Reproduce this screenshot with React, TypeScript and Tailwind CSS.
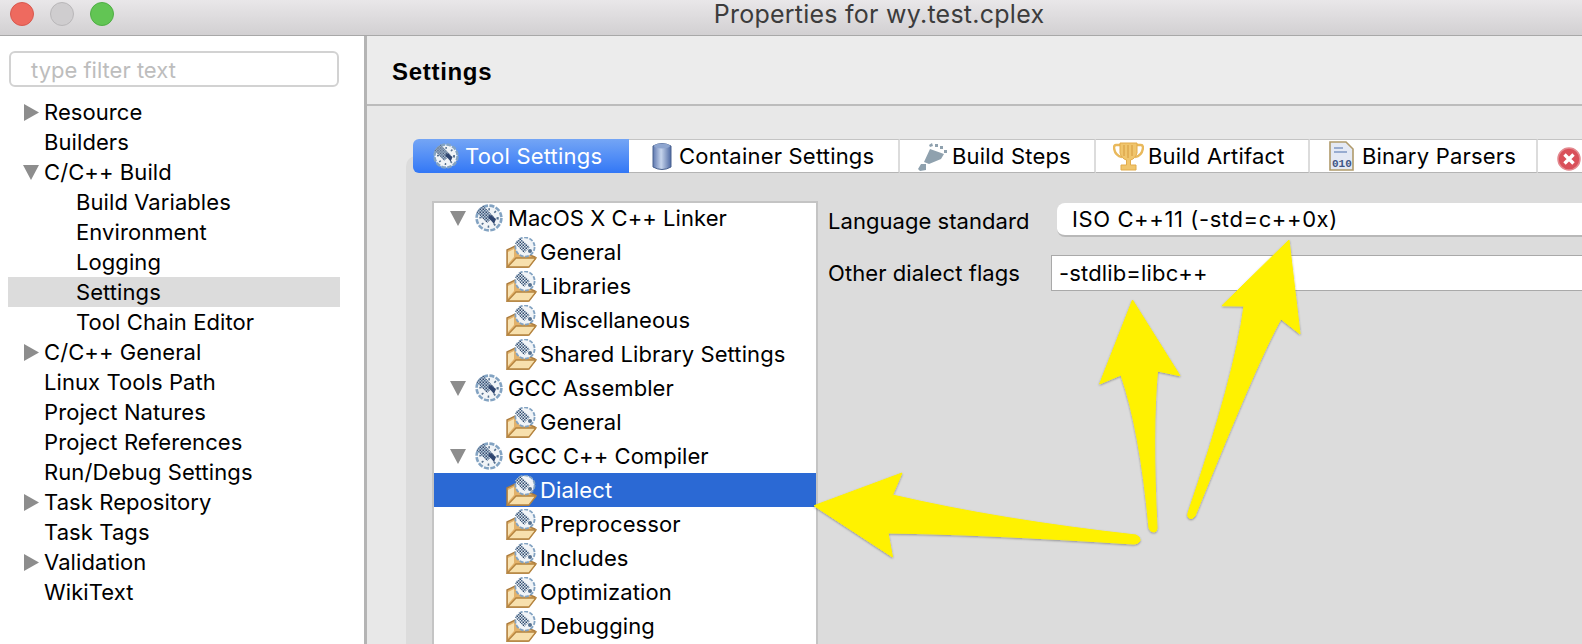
import React from "react";

const font = "font-['Inter','Liberation_Sans',sans-serif]";

function Gear({ size = 28 }: { size?: number }) {
  return (
    <svg width={size} height={size} viewBox="0 0 28 28" className="shrink-0">
      <defs>
        <pattern id="dith" width="3" height="3" patternUnits="userSpaceOnUse">
          <rect width="3" height="3" fill="#b9c8d8" />
          <rect width="1.5" height="1.5" fill="#4f6c8e" />
          <rect x="1.5" y="1.5" width="1.5" height="1.5" fill="#34496c" />
        </pattern>
      </defs>
      <circle cx="14" cy="14" r="12.4" fill="#f1f4f7" stroke="#83a3c2" strokeWidth="2.6" strokeDasharray="5 1.5" />
      <circle cx="14" cy="14" r="8.6" fill="none" stroke="#55708f" strokeWidth="2.2" strokeDasharray="1.6 5" />
      <path d="M8 1.5 L1.5 8 L12 19 L19 13 Z" fill="url(#dith)" />
      <path d="M13 13 L19 20 L21 15 L16 11 Z" fill="#2f4570" />
    </svg>
  );
}

function FolderGear() {
  return (
    <svg width="31" height="31" viewBox="0 0 31 31" className="shrink-0">
      <defs>
        <pattern id="dith2" width="3" height="3" patternUnits="userSpaceOnUse">
          <rect width="3" height="3" fill="#dfe7ef" />
          <rect width="1.5" height="1.5" fill="#4a6788" />
          <rect x="1.5" y="1.5" width="1.5" height="1.5" fill="#2f4566" />
        </pattern>
      </defs>
      <path d="M1 13 L9 9 L14 14 L29 20 L29 22 L22 30 L1 30 Z" fill="#e3b26a" stroke="#ad7d3e" strokeWidth="1.4" />
      <path d="M2 15 L2 27 L8 20 L8 12 Z" fill="#f8e2b2" />
      <path d="M1.5 30 L10 21 L30 21 L23 30 Z" fill="#f7e0ad" stroke="#b5843f" strokeWidth="1.4" />
      <circle cx="19" cy="10" r="9.6" fill="#f1f4f7" stroke="#83a3c2" strokeWidth="1.8" strokeDasharray="4 1.5" />
      <path d="M14 1 L9 6 L18 16 L24 10 Z" fill="url(#dith2)" />
      <circle cx="24" cy="14" r="2" fill="#55708f" />
    </svg>
  );
}

function Tri({ open }: { open?: boolean }) {
  return open ? (
    <svg width="16" height="15" viewBox="0 0 16 15" className="shrink-0"><path d="M0 0 H16 L8 15 Z" fill="#8d8d8d" /></svg>
  ) : (
    <svg width="15" height="17" viewBox="0 0 15 17" className="shrink-0"><path d="M0 0 L15 8.5 L0 17 Z" fill="#8d8d8d" /></svg>
  );
}

const leftRows: { t: string; tri?: "o" | "c"; child?: boolean; sel?: boolean }[] = [
  { t: "Resource", tri: "c" },
  { t: "Builders" },
  { t: "C/C++ Build", tri: "o" },
  { t: "Build Variables", child: true },
  { t: "Environment", child: true },
  { t: "Logging", child: true },
  { t: "Settings", child: true, sel: true },
  { t: "Tool Chain Editor", child: true },
  { t: "C/C++ General", tri: "c" },
  { t: "Linux Tools Path" },
  { t: "Project Natures" },
  { t: "Project References" },
  { t: "Run/Debug Settings" },
  { t: "Task Repository", tri: "c" },
  { t: "Task Tags" },
  { t: "Validation", tri: "c" },
  { t: "WikiText" },
];

const treeRows: { t: string; parent?: boolean; sel?: boolean }[] = [
  { t: "MacOS X C++ Linker", parent: true },
  { t: "General" },
  { t: "Libraries" },
  { t: "Miscellaneous" },
  { t: "Shared Library Settings" },
  { t: "GCC Assembler", parent: true },
  { t: "General" },
  { t: "GCC C++ Compiler", parent: true },
  { t: "Dialect", sel: true },
  { t: "Preprocessor" },
  { t: "Includes" },
  { t: "Optimization" },
  { t: "Debugging" },
];

function Tab({ w, icon, label, gap = "gap-[6px]", pl }: { w: string; icon: React.ReactNode; label?: string; gap?: string; pl: string }) {
  return (
    <div className={`${w} ${pl} ${gap} h-[34px] shrink-0 flex items-center bg-white border-r-2 border-[#dcdcdc] border-t border-t-[#c4c4c4] border-b border-b-[#b4b4b4] text-[22px] tracking-[0.2px] text-black`}>
      {icon}
      {label && <span>{label}</span>}
    </div>
  );
}

export default function App() {
  return (
    <div className={`relative w-[1582px] h-[644px] overflow-hidden bg-white flex flex-col ${font}`}>
      <div className="h-[36px] shrink-0 relative flex items-center justify-center bg-gradient-to-b from-[#e9e7e9] to-[#d2d0d2] border-b border-[#a8a8a8]">
        <div className="absolute left-[10px] top-[2px] flex gap-[16px]">
          <div className="w-[24px] h-[24px] rounded-full bg-[#ee6a5f] border border-[#d8584e]" />
          <div className="w-[24px] h-[24px] rounded-full bg-[#cfcdcf] border border-[#b9b7b9]" />
          <div className="w-[24px] h-[24px] rounded-full bg-[#62c554] border border-[#4fae44]" />
        </div>
        <span className="text-[25px] tracking-[0.25px] text-[#3c3c3c] relative top-[-3px] left-[88px]">Properties for wy.test.cplex</span>
      </div>

      <div className="flex-1 flex min-h-0">
        <div className="w-[364px] shrink-0 bg-white pt-[15px] pl-[8px] pr-[24px]">
          <div className="ml-[1px] w-[330px] h-[36px] border-2 border-[#d2d2d2] rounded-[6px] pl-[20px] pt-[2px] flex items-center text-[22px] text-[#bdbdbd]">
            type filter text
          </div>
          <div className="mt-[10px] text-[22px] tracking-[0.08px] text-black">
            {leftRows.map((r) => (
              <div key={r.t} className={`h-[30px] flex items-center ${r.sel ? "bg-[#dcdcdc]" : ""}`}>
                <div className="w-[36px] shrink-0 flex justify-end pr-[5px]">
                  {r.tri && <Tri open={r.tri === "o"} />}
                </div>
                {r.child && <div className="w-[32px] shrink-0" />}
                <span>{r.t}</span>
              </div>
            ))}
          </div>
        </div>
        <div className="w-[3px] shrink-0 bg-[#b4b4b4]" />
        <div className="flex-1 min-w-0 bg-[#e8e8e8] flex flex-col">
          <div className="h-[70px] shrink-0 bg-[#ececec] border-b-2 border-[#bcbcbc] pl-[25px] pt-[3px] flex items-center">
            <span className="font-bold text-[24px] tracking-[0.7px] text-black font-['Liberation_Sans',sans-serif]">Settings</span>
          </div>
          <div className="flex-1 min-h-0 pl-[39px] pt-[33px]">
            <div className="relative h-full">
              <div className="absolute left-0 right-0 top-[17px] bottom-0 rounded-tl-[10px] bg-[#dcdcdc]" />
              <div className="relative flex pl-[7px] h-[34px]">
                <div className="w-[216px] shrink-0 h-[34px] rounded-l-[6px] bg-gradient-to-b from-[#74a5f5] to-[#3277f6] flex items-center pl-[20px] gap-[6px] text-white text-[22px] tracking-[0.2px]">
                  <Gear size={26} />
                  <span>Tool Settings</span>
                </div>
                <Tab w="w-[271px]" pl="pl-[23px]" gap="gap-[7px]" label="Container Settings" icon={
                  <svg width="20" height="29" viewBox="0 0 20 29" className="shrink-0">
                    <defs><linearGradient id="cyl" x1="0" x2="1" y1="0" y2="0"><stop offset="0" stopColor="#5e78b0" /><stop offset="0.45" stopColor="#c6d4ec" /><stop offset="1" stopColor="#4f6aa4" /></linearGradient></defs>
                    <path d="M1 4 Q10 -1 19 4 V25 Q10 30 1 25 Z" fill="url(#cyl)" stroke="#4a628f" />
                    <ellipse cx="10" cy="4" rx="8" ry="2.5" fill="#8ea5cf" />
                  </svg>
                } />
                <Tab w="w-[196px]" pl="pl-[17px]" gap="gap-[4px]" label="Build Steps" icon={
                  <svg width="31" height="29" viewBox="0 0 31 29" className="shrink-0">
                    <path d="M1 27 L4 22 L9 22 L9 28 L3 29 Z M7 20 L13 7 L27 12 L24 17 L12 22 Z" fill="#8fa1ae" />
                    <path d="M12 3 l3 -2 l1 3 l-3 1 Z M18 2 l3 0 l0 3 l-3 0 Z M23 4 l3 0 l0 3 l-3 0 Z M27 8 l3 0 l0 3 l-3 0 Z" fill="#8fa1ae" />
                  </svg>
                } />
                <Tab w="w-[214px]" pl="pl-[17px]" gap="gap-[4px]" label="Build Artifact" icon={
                  <svg width="31" height="29" viewBox="0 0 31 29" className="shrink-0">
                    <path d="M8 3 H3 Q1 3 1 6 Q2 14 9 15 M23 3 H28 Q30 3 30 6 Q29 14 22 15" fill="none" stroke="#e9b95c" strokeWidth="2.4" />
                    <path d="M7 1 H24 V11 Q22 17 17.5 18 V23 H23 V28 H8 V23 H13.5 V18 Q9 17 7 11 Z" fill="#f0c56c" stroke="#e2ab4a" />
                    <path d="M11 3 V14 M15 3 V16 M19 3 V14" stroke="#d49a3e" strokeWidth="1" />
                  </svg>
                } />
                <Tab w="w-[228px]" pl="pl-[19px]" gap="gap-[8px]" label="Binary Parsers" icon={
                  <svg width="25" height="30" viewBox="0 0 25 30" className="shrink-0">
                    <path d="M1 1 H17 L24 8 V29 H1 Z" fill="#e4e9f4" stroke="#b09a6a" strokeWidth="1.6" />
                    <path d="M5 7 H14 M5 11 H18" stroke="#7f98c4" strokeWidth="1.6" />
                    <text x="3" y="26" fontSize="11" fontWeight="700" fill="#3f5586" fontFamily="Liberation Mono, monospace" textLength="20">010</text>
                  </svg>
                } />
                <div className="flex-1 h-[34px] bg-white border-t border-t-[#c4c4c4] border-b border-b-[#b4b4b4] pl-[19px] flex items-center overflow-hidden">
                  <svg width="24" height="24" viewBox="0 0 24 24" className="shrink-0 mt-[5px]">
                    <circle cx="12" cy="12" r="11" fill="#d9505a" stroke="#e38a90" strokeWidth="1.5" />
                    <path d="M7.5 7.5 L16.5 16.5 M16.5 7.5 L7.5 16.5" stroke="#fff" strokeWidth="3.4" />
                  </svg>
                </div>
              </div>

              <div className="relative flex pt-[28px] pl-[26px]">
                <div className="w-[386px] shrink-0 h-[500px] bg-white border-2 border-[#c4c4c4] border-b-0">
                  <div className="-mt-[2px]">
                    {treeRows.map((r, i) =>
                      r.parent ? (
                        <div key={i} className="h-[34px] flex items-center text-[22px] text-black">
                          <div className="w-[16px] ml-[16px] shrink-0"><Tri open /></div>
                          <div className="ml-[9px] mr-[5px]"><Gear /></div>
                          <span className="tracking-[0.05px]">{r.t}</span>
                        </div>
                      ) : (
                        <div key={i} className={`h-[34px] flex items-center text-[22px] pl-[72px] gap-[3px] ${r.sel ? "bg-[#2b69d4] text-white" : "text-black"}`}>
                          <FolderGear />
                          <span className="tracking-[0.1px]">{r.t}</span>
                        </div>
                      )
                    )}
                  </div>
                </div>
                <div className="flex-1 min-w-0 pl-[10px] text-[22px] text-black">
                  <div className="flex items-center h-[34px] mt-[2px]">
                    <span className="w-[229px] shrink-0 tracking-[0.05px] relative top-[1px]">Language standard</span>
                    <div className="flex-1 h-[34px] bg-white rounded-l-[8px] border-b-2 border-[#b8b8b8] pl-[15px] flex items-center tracking-[0.6px]">ISO C++11 (-std=c++0x)</div>
                  </div>
                  <div className="flex items-center h-[36px] mt-[18px]">
                    <span className="w-[223px] shrink-0 tracking-[0.08px]">Other dialect flags</span>
                    <div className="flex-1 h-[36px] bg-white border border-[#a9a9a9] border-r-0 pl-[7px] flex items-center tracking-[0.15px]">-stdlib=libc++</div>
                  </div>
                </div>
              </div>
            </div>
          </div>
        </div>
      </div>

      <svg className="absolute left-0 top-0 pointer-events-none" width="1582" height="644" viewBox="0 0 1582 644">
        <defs>
          <filter id="ash" x="-10%" y="-10%" width="120%" height="120%">
            <feDropShadow dx="0" dy="1" stdDeviation="1" floodColor="#000" floodOpacity="0.35" />
          </filter>
        </defs>
        <g fill="#fff200" filter="url(#ash)" stroke="#fff200" strokeLinejoin="round">
          <path d="M814 505.7 L902 473 L892.5 495 Q1000 520 1136 535 Q1141 537 1140 541 Q1138 544 1134 544 Q980 534 888 533 L892.5 557 Z" />
          <path d="M1132.5 300 L1180 375.7 L1157.5 371 Q1152 430 1157 528 Q1157 532 1154 532 Q1150 532 1149 528 Q1140 430 1121 375 L1099.6 384 Z" />
          <path d="M1289 240 L1300 334 L1281 319 Q1260 355 1195 516 Q1192 520 1189 518 Q1187 516 1188 513 Q1235 375 1244 306 L1222 305.7 Z" />
        </g>
      </svg>
    </div>
  );
}
